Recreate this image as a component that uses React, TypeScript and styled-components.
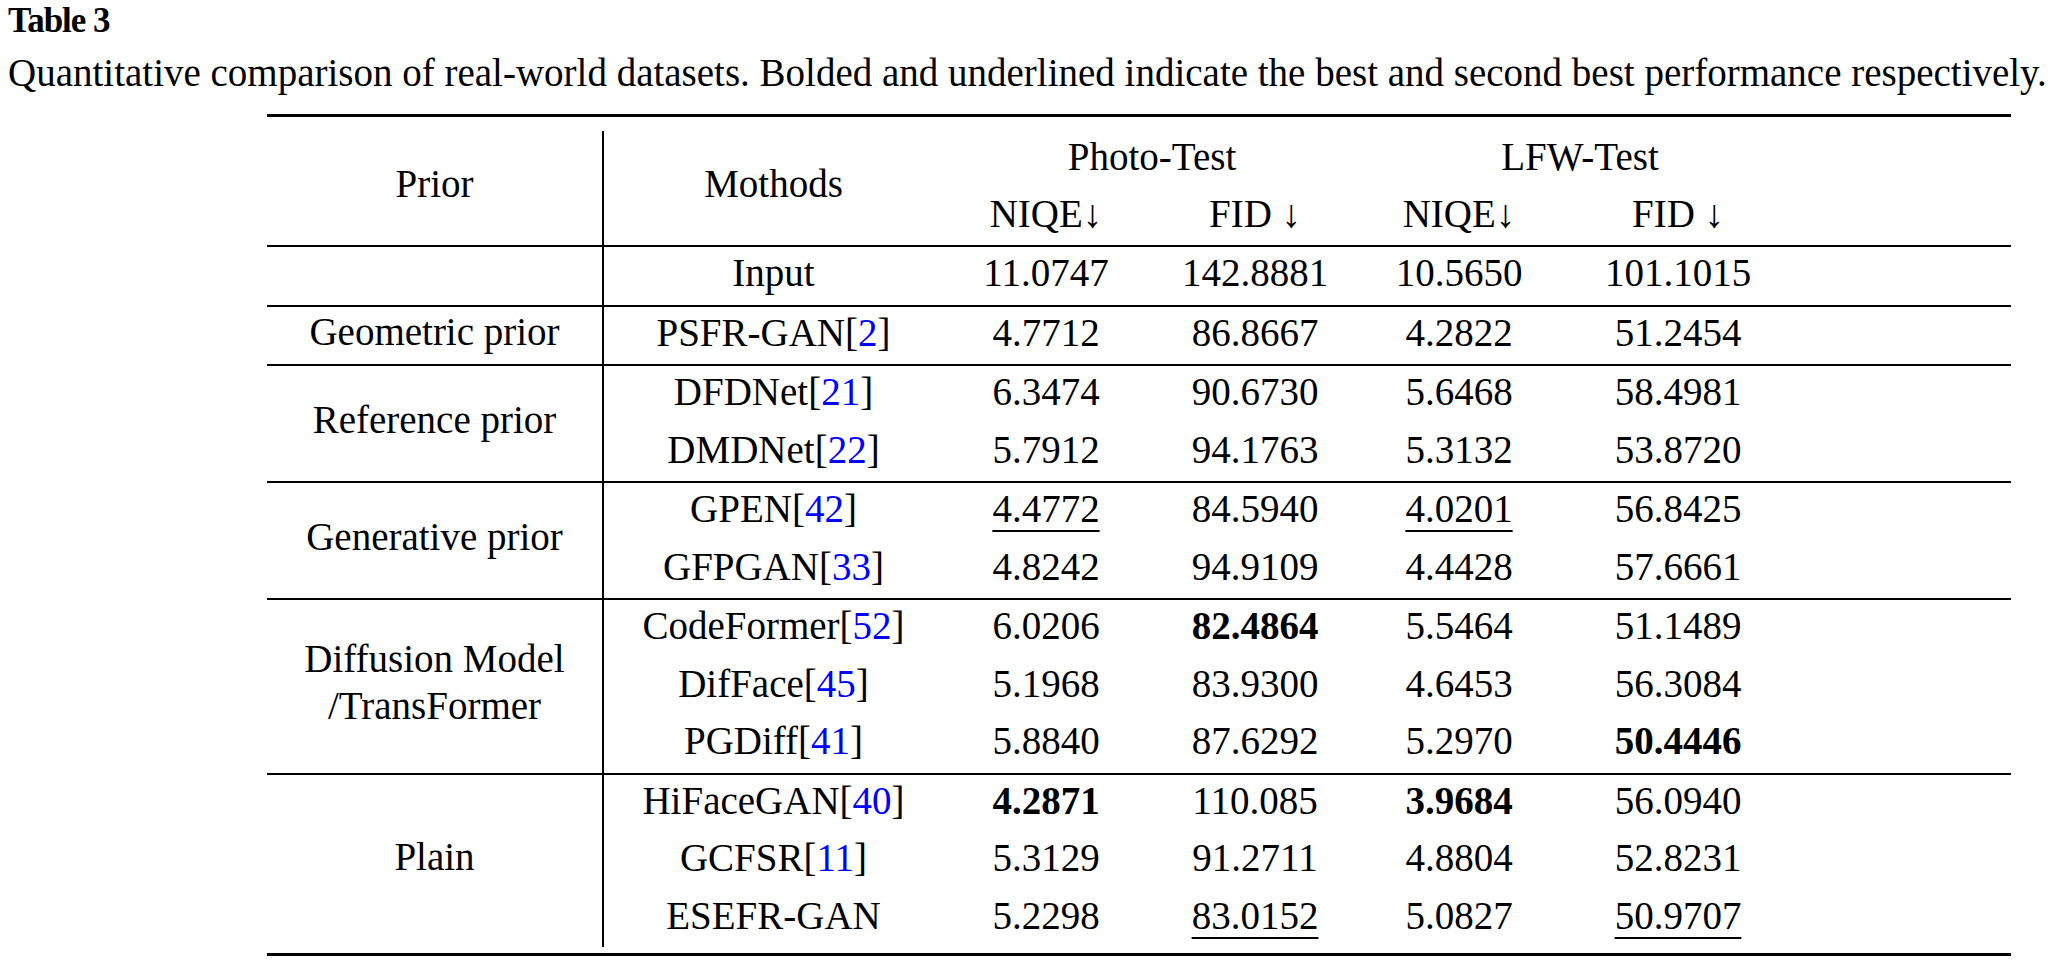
import React from "react";
import styled, { createGlobalStyle } from "styled-components";

type Score = { v: string; bold?: boolean; under?: boolean };
type Method = { name: string; cite?: string; scores: Score[] };
type Group = { prior: string[]; rows: Method[] };

// "*x" = best (bold), "_x" = second best (underlined)
const s = (raw: string): Score => {
  if (raw.startsWith("*")) return { v: raw.slice(1), bold: true };
  if (raw.startsWith("_")) return { v: raw.slice(1), under: true };
  return { v: raw };
};

const m = (name: string, cite: string | undefined, ...vals: string[]): Method => ({
  name,
  cite,
  scores: vals.map(s),
});

const groups: Group[] = [
  { prior: [], rows: [m("Input", undefined, "11.0747", "142.8881", "10.5650", "101.1015")] },
  { prior: ["Geometric prior"], rows: [m("PSFR-GAN", "2", "4.7712", "86.8667", "4.2822", "51.2454")] },
  {
    prior: ["Reference prior"],
    rows: [
      m("DFDNet", "21", "6.3474", "90.6730", "5.6468", "58.4981"),
      m("DMDNet", "22", "5.7912", "94.1763", "5.3132", "53.8720"),
    ],
  },
  {
    prior: ["Generative prior"],
    rows: [
      m("GPEN", "42", "_4.4772", "84.5940", "_4.0201", "56.8425"),
      m("GFPGAN", "33", "4.8242", "94.9109", "4.4428", "57.6661"),
    ],
  },
  {
    prior: ["Diffusion Model", "/TransFormer"],
    rows: [
      m("CodeFormer", "52", "6.0206", "*82.4864", "5.5464", "51.1489"),
      m("DifFace", "45", "5.1968", "83.9300", "4.6453", "56.3084"),
      m("PGDiff", "41", "5.8840", "87.6292", "5.2970", "*50.4446"),
    ],
  },
  {
    prior: ["Plain"],
    rows: [
      m("HiFaceGAN", "40", "*4.2871", "110.085", "*3.9684", "56.0940"),
      m("GCFSR", "11", "5.3129", "91.2711", "4.8804", "52.8231"),
      m("ESEFR-GAN", undefined, "5.2298", "_83.0152", "5.0827", "_50.9707"),
    ],
  },
];

// last column is the empty stretch the rules run across on the right
const colWidths = [337, 339, 206, 212, 196, 242, 212];

export default function App() {
  return (
    <Page>
      <GlobalStyle />
      <Heading>
        <Title>Table 3</Title>
        <Caption>
          Quantitative comparison of real-world datasets. Bolded and underlined indicate the best and
          second best performance respectively.
        </Caption>
      </Heading>
      <Table>
        <colgroup>
          {colWidths.map((w, i) => (
            <Col key={i} $w={w} />
          ))}
        </colgroup>
        <thead>
          <Spacer $h={14}>
            <td colSpan={7} />
          </Spacer>
          <Row $h={56}>
            <HeadCell rowSpan={2} $divider>
              Prior
            </HeadCell>
            <HeadCell rowSpan={2} $divider={false}>
              Mothods
            </HeadCell>
            <HeadCell colSpan={2}>Photo-Test</HeadCell>
            <HeadCell colSpan={2}>LFW-Test</HeadCell>
            <HeadCell rowSpan={2} />
          </Row>
          <Row $h={58}>
            <HeadCell>NIQE↓</HeadCell>
            <HeadCell>FID ↓</HeadCell>
            <HeadCell>NIQE↓</HeadCell>
            <HeadCell>FID ↓</HeadCell>
          </Row>
        </thead>
        <tbody>
          {groups.map((g, gi) => (
            <React.Fragment key={gi}>
              <RuleRow>
                <td colSpan={7} />
              </RuleRow>
              {g.rows.map((r, ri) => (
                <Row key={r.name} $h={57.5}>
                  {ri === 0 && (
                    <PriorCell rowSpan={g.rows.length}>
                      {g.prior.map((line) => (
                        <div key={line}>{line}</div>
                      ))}
                    </PriorCell>
                  )}
                  <Cell>
                    {r.name}
                    {r.cite && (
                      <>
                        [<Cite>{r.cite}</Cite>]
                      </>
                    )}
                  </Cell>
                  {r.scores.map((sc, si) => (
                    <Cell key={si}>
                      <Value $bold={sc.bold} $under={sc.under}>
                        {sc.v}
                      </Value>
                    </Cell>
                  ))}
                  <Cell />
                </Row>
              ))}
            </React.Fragment>
          ))}
          <Spacer $h={6}>
            <td colSpan={7} />
          </Spacer>
        </tbody>
      </Table>
    </Page>
  );
}

const GlobalStyle = createGlobalStyle`
  html, body {
    margin: 0;
    padding: 0;
    background: #fff;
  }
  body {
    font-family: "Liberation Serif", "Times New Roman", serif;
    color: #000;
  }
`;

const Page = styled.div`
  width: 2057px;
  min-height: 968px;
`;

const Heading = styled.div`
  padding: 0 0 0 8px;
  display: flex;
  flex-direction: column;
  gap: 10px;
`;

const Title = styled.div`
  font-size: 35px;
  line-height: 42px;
  letter-spacing: -1px;
  font-weight: bold;
`;

const Caption = styled.div`
  font-size: 39px;
  line-height: 42px;
  white-space: nowrap;
`;

const Table = styled.table`
  width: 1744px;
  margin: 20px 0 0 267px;
  border-collapse: separate;
  border-spacing: 0;
  table-layout: fixed;
  border-top: 3px solid #000;
  border-bottom: 3px solid #000;
  font-size: 39px;
  line-height: 44px;
`;

const Col = styled.col<{ $w: number }>`
  width: ${(p) => p.$w}px;
`;

const Row = styled.tr<{ $h: number }>`
  height: ${(p) => p.$h}px;
`;

const Spacer = styled.tr<{ $h: number }>`
  height: ${(p) => p.$h}px;

  td {
    padding: 0;
  }
`;

const RuleRow = styled.tr`
  height: 2px;

  td {
    padding: 0;
    height: 2px;
    background: #000;
    font-size: 0;
    line-height: 0;
  }
`;

const HeadCell = styled.th<{ $divider?: boolean }>`
  font-weight: normal;
  text-align: center;
  vertical-align: middle;
  white-space: nowrap;
  padding: 0 0 ${(p) => (p.$divider !== undefined ? 8 : 5)}px;
  border-right: ${(p) => (p.$divider ? "2px solid #000" : "none")};
`;

const Cell = styled.td`
  text-align: center;
  vertical-align: middle;
  white-space: nowrap;
  padding: 0 0 5px;
`;

const PriorCell = styled.td`
  text-align: center;
  vertical-align: middle;
  white-space: nowrap;
  padding: 0 0 8px;
  line-height: 47px;
  border-right: 2px solid #000;
`;

const Cite = styled.span`
  color: #0000ff;
`;

const Value = styled.span<{ $bold?: boolean; $under?: boolean }>`
  font-weight: ${(p) => (p.$bold ? "bold" : "normal")};
  text-decoration: ${(p) => (p.$under ? "underline" : "none")};
  text-decoration-thickness: 2px;
  text-underline-offset: 8px;
`;
